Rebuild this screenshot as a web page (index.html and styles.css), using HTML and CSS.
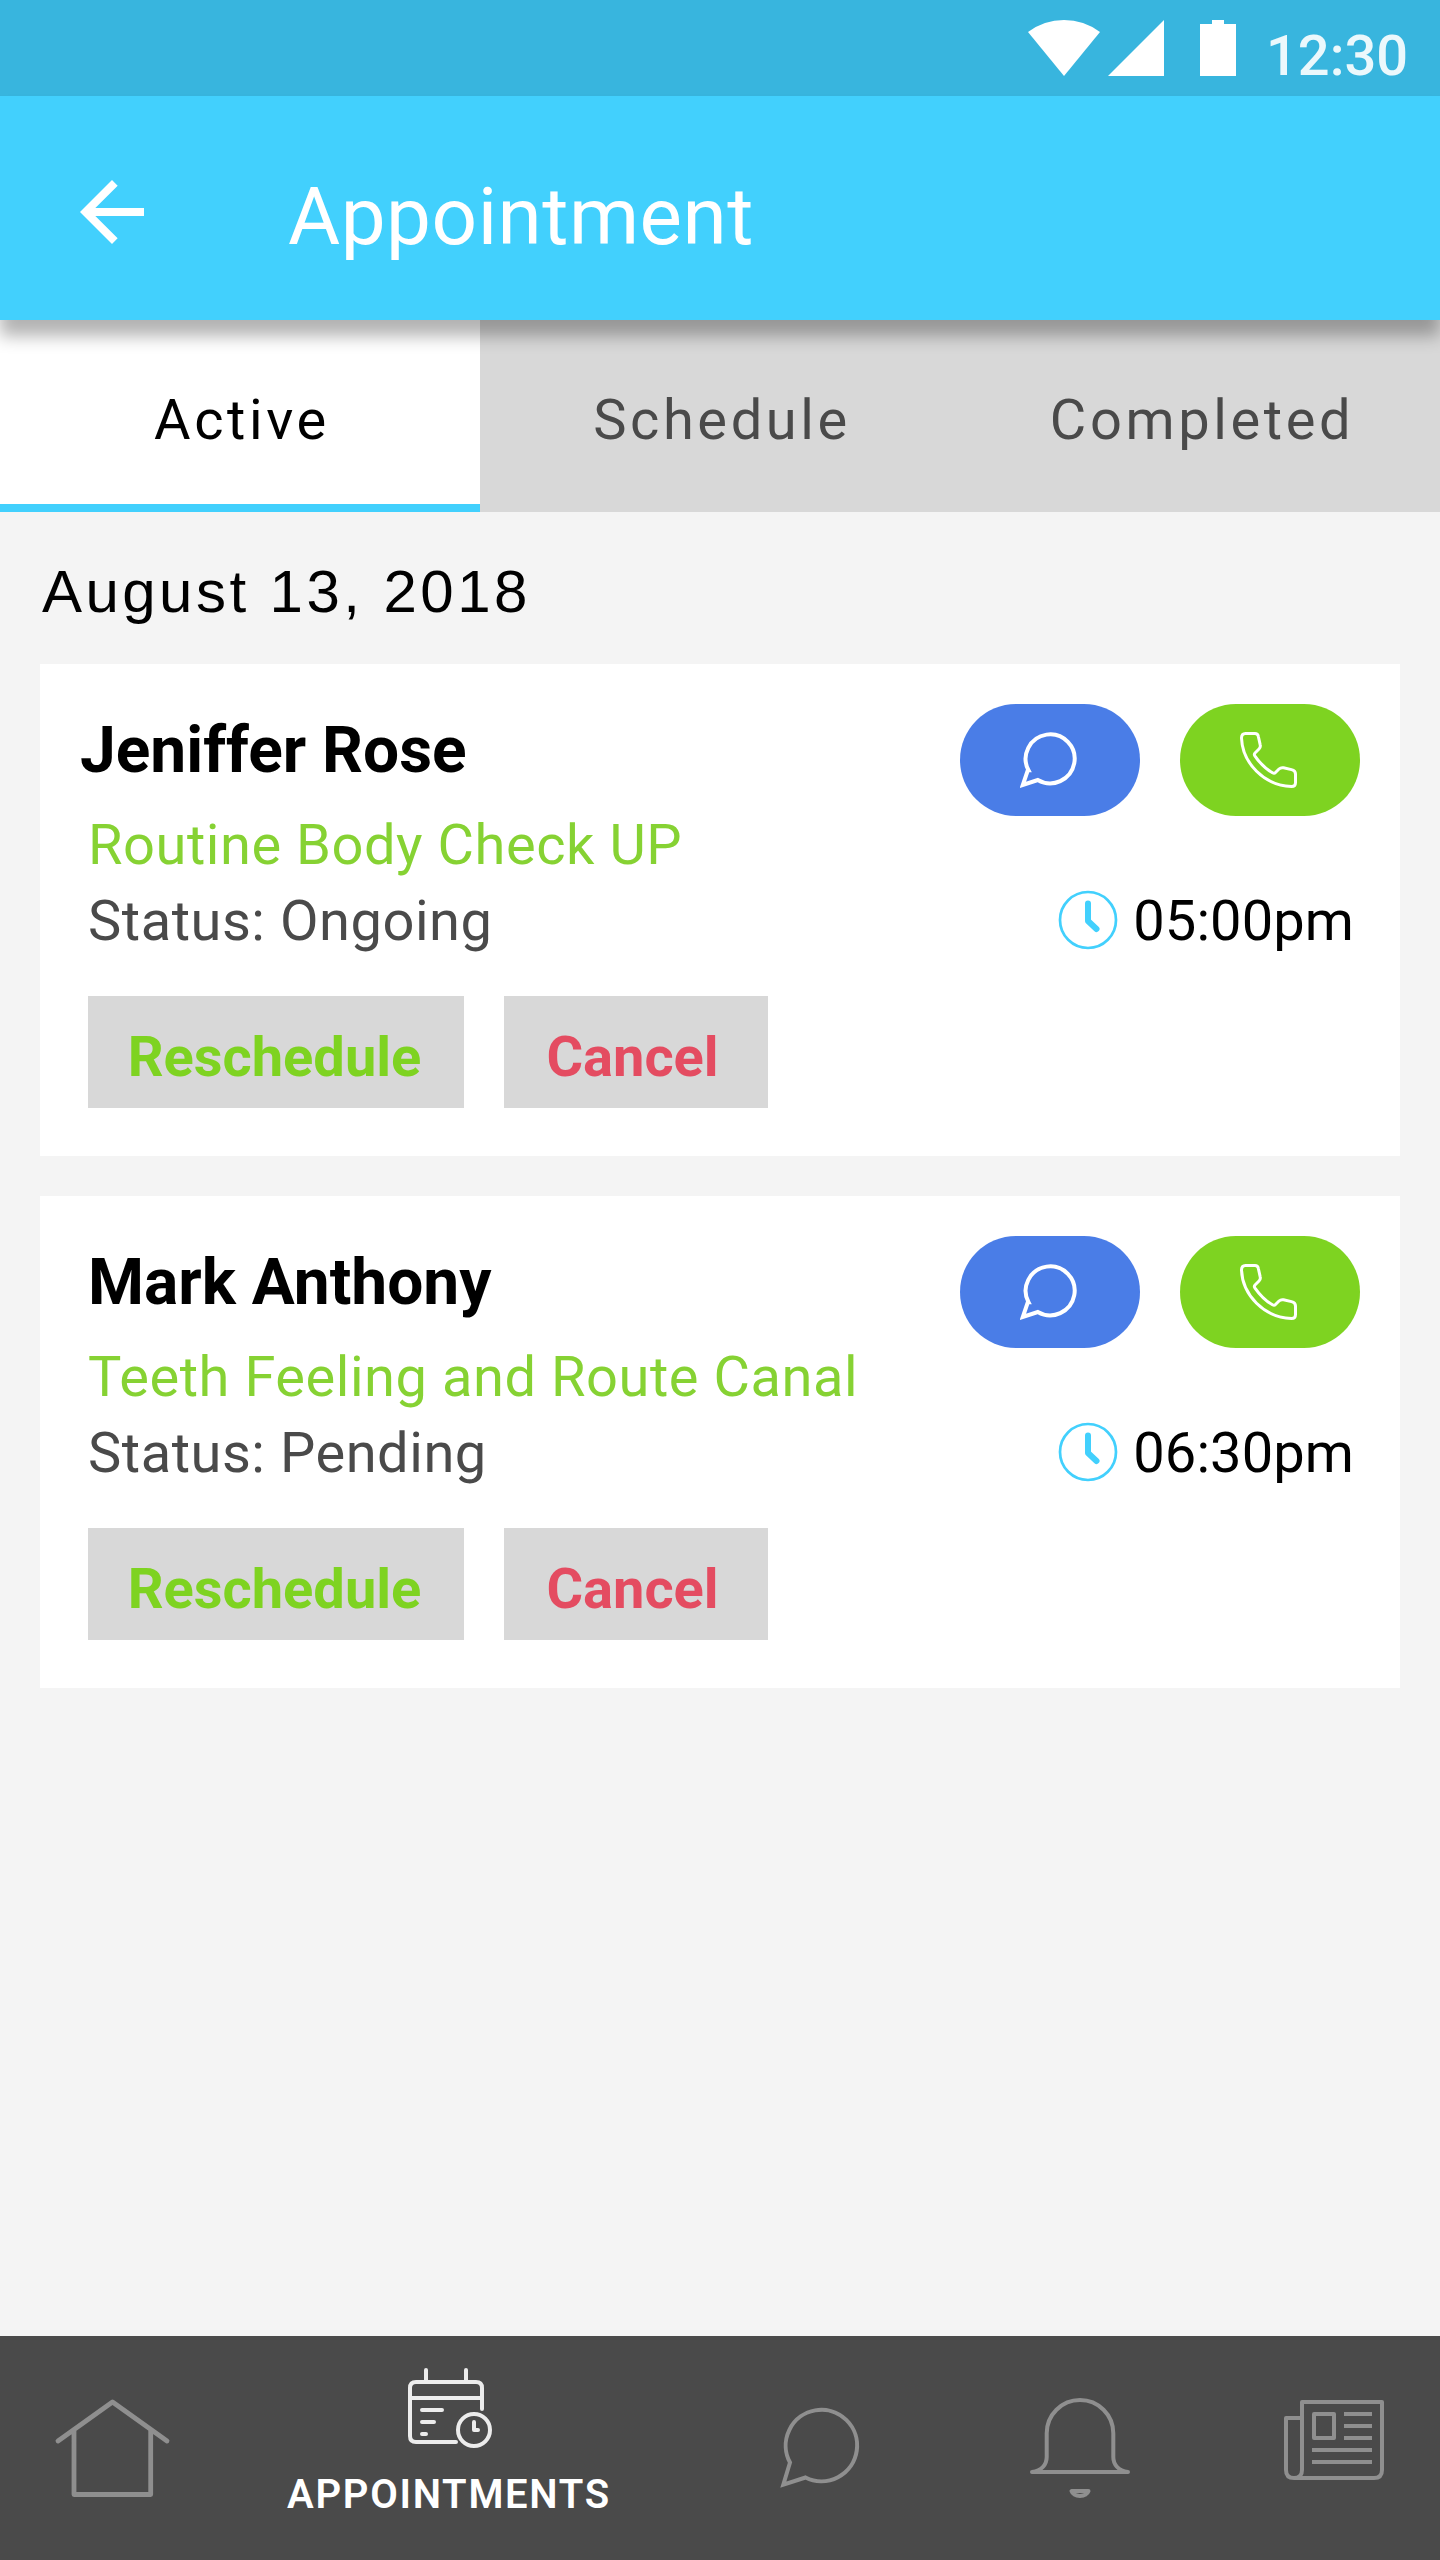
FILE: index.html
```html
<!DOCTYPE html>
<html lang="en">
<head>
<meta charset="utf-8">
<title>Appointment</title>
<link rel="stylesheet" href="styles.css">
</head>
<body>
<svg class="defs" width="0" height="0" aria-hidden="true">
  <symbol id="bubble" viewBox="1020.500 730 60 60">
    <path d="M1029 770.3A24.5 24.5 0 1 1 1038.3 780L1023.3 785L1028.3 770.3Z" fill="none" stroke="#fff" stroke-width="4"/>
  </symbol>
  <symbol id="phone" viewBox="1239 730 62 60">
    <path d="M1245.5 733.5H1255Q1257.8 733.5 1258.3 736.3L1260.2 744.8Q1260.8 747.2 1259 749L1255 753Q1253.8 754.2 1254.8 755.8Q1263 767.5 1272.5 772.8Q1274.3 773.8 1275.5 772.5L1279 769Q1281 767.2 1283.5 767.8L1291.5 769.6Q1295.5 770.5 1295.5 774V782.5Q1295.5 786.5 1291.5 786.5C1264 785.5 1242.500 763 1241.500 738Q1241.500 733.500 1245.500 733.500Z" fill="none" stroke="#fff" stroke-width="3"/>
  </symbol>
  <symbol id="clock" viewBox="0 0 60 60">
    <circle cx="30" cy="30" r="28" fill="none" stroke="#42d0fd" stroke-width="2.700"/>
    <path d="M30 13.500V31L38.500 39" fill="none" stroke="#42d0fd" stroke-width="6" stroke-linecap="round" stroke-linejoin="round"/>
  </symbol>
</svg>
<div class="screen">
  <div class="status-bar">
    <svg width="208" height="56" viewBox="0 0 208 56" fill="#fff">
      <path d="M36 56L0 12Q16 0 36 0T72 12Z"/>
      <path d="M80 56L136 0V56Z"/>
      <path d="M172 4H184V0H196V4H208V56H172Z"/>
    </svg>
    <span class="time">12:30</span>
  </div>
  <header class="app-bar">
    <svg width="96" height="96" viewBox="0 0 24 24" fill="#fff"><path d="M20 11H7.830l5.590-5.590L12 4l-8 8 8 8 1.410-1.410L7.830 13H20z"/></svg>
    <h1>Appointment</h1>
  </header>
  <nav class="tabs">
    <div class="tab active">Active</div>
    <div class="tab">Schedule</div>
    <div class="tab">Completed</div>
  </nav>
  <main>
    <h2 class="date">August 13, 2018</h2>
    <article class="card">
      <div class="info">
        <h3 class="outdent">Jeniffer Rose</h3>
        <p class="service">Routine Body Check UP</p>
        <p class="state">Status: Ongoing</p>
        <div class="actions"><button class="reschedule">Reschedule</button><button class="cancel">Cancel</button></div>
      </div>
      <div class="side">
        <div class="contact">
          <span class="pill message"><svg width="60" height="60"><use href="#bubble"/></svg></span>
          <span class="pill call"><svg width="62" height="60"><use href="#phone"/></svg></span>
        </div>
        <div class="slot"><svg width="60" height="60"><use href="#clock"/></svg><span>05:00pm</span></div>
      </div>
    </article>
    <article class="card">
      <div class="info">
        <h3>Mark Anthony</h3>
        <p class="service">Teeth Feeling and Route Canal</p>
        <p class="state">Status: Pending</p>
        <div class="actions"><button class="reschedule">Reschedule</button><button class="cancel">Cancel</button></div>
      </div>
      <div class="side">
        <div class="contact">
          <span class="pill message"><svg width="60" height="60"><use href="#bubble"/></svg></span>
          <span class="pill call"><svg width="62" height="60"><use href="#phone"/></svg></span>
        </div>
        <div class="slot"><svg width="60" height="60"><use href="#clock"/></svg><span>06:30pm</span></div>
      </div>
    </article>
  </main>
  <footer class="bottom-nav">
    <div class="nav-item home">
      <svg width="120" height="104" viewBox="52 2396 120 104">
        <path d="M58 2441L112.500 2402L167 2441M74 2430V2494.500H150.700V2430"/>
      </svg>
    </div>
    <div class="nav-item current">
      <svg width="88" height="84" viewBox="406 2366 88 84">
        <path d="M426 2370V2380M466 2370V2380M482 2409V2388Q482 2382 476 2382H416Q410 2382 410 2388V2436Q410 2442 416 2442H456M410 2398H482M422 2410H442M422 2422H434M422 2434H426M474 2422V2430H478"/>
        <circle cx="474" cy="2430" r="16"/>
      </svg>
      <span>APPOINTMENTS</span>
    </div>
    <div class="nav-item chat">
      <svg width="88" height="84" viewBox="776 2406 88 84">
        <path stroke-linecap="butt" stroke-linejoin="miter" d="M790 2462.500A35.700 35.700 0 1 1 805.500 2477.500L783.300 2484.700L790 2462.500Z"/>
      </svg>
    </div>
    <div class="nav-item bell">
      <svg width="104" height="104" viewBox="1028 2396 104 104">
        <path d="M1032 2472H1128M1032 2472C1042 2471 1046.700 2464 1046.700 2457V2433.300A33.300 33.300 0 0 1 1113.300 2433.300V2457C1113.300 2464 1118 2471 1128 2472M1071.500 2491H1088.500C1086 2497.500 1074 2497.500 1071.500 2491Z"/>
      </svg>
    </div>
    <div class="nav-item news">
      <svg width="102" height="82" viewBox="1283 2399 102 82">
        <path d="M1302 2418H1286V2470Q1286 2478 1294 2478H1374Q1382 2478 1382 2470V2402H1302V2470Q1302 2478 1294 2478M1314 2414H1334V2438H1314Z"/>
        <path stroke-linecap="butt" d="M1344 2414H1372M1344 2426H1372M1344 2438H1372M1312 2450H1372M1312 2462H1372"/>
      </svg>
    </div>
  </footer>
</div>
</body>
</html>
```
FILE: styles.css
```css
* { box-sizing: border-box; margin: 0; padding: 0; }
body { background: #f4f4f4; font-family: Roboto, "Liberation Sans", sans-serif; color: #000; }
svg { display: block; flex: none; }
.defs { position: absolute; }
.screen { width: 1440px; height: 2560px; display: flex; flex-direction: column; overflow: hidden; }

.status-bar { height: 96px; background: #38b5de; display: flex; justify-content: flex-end; align-items: flex-start; padding: 20px 32px 0 0; }
.time { width: 142px; margin-left: 30px; font-size: 56px; font-weight: 500; line-height: 73px; color: rgba(255, 255, 255, .9); white-space: nowrap; }

.app-bar { position: relative; z-index: 1; height: 224px; background: #42d0fd; display: flex; align-items: center; padding: 20px 64px 12px; gap: 128px; box-shadow: 0 16px 16px rgba(0, 0, 0, .3); }
.app-bar h1 { font-size: 80px; font-weight: 400; line-height: 96px; letter-spacing: .500px; color: #fff; padding-top: 9px; }

.tabs { height: 192px; display: grid; grid-template-columns: repeat(3, 1fr); }
.tab { background: #d8d8d8; color: #4a4a4a; font-size: 56px; letter-spacing: 3.600px; text-align: center; line-height: 201px; height: 192px; padding-left: 4px; }
.tab.active { background: #fff; color: #000; border-bottom: 8px solid #42d0fd; }

main { flex: 1; padding: 0 40px; }
.date { height: 152px; padding-left: 2px; font: 400 60px/160px "Liberation Sans", Arial, sans-serif; letter-spacing: 3.450px; }
.card { height: 492px; margin-bottom: 40px; background: #fff; display: flex; justify-content: space-between; padding: 40px 40px 0 48px; }
.info h3 { font-size: 64px; font-weight: 700; line-height: 94px; height: 92px; white-space: nowrap; }
.info .outdent { margin-left: -8px; }
.info p { font-size: 56px; line-height: 76px; letter-spacing: .540px; white-space: nowrap; }
.service { color: #86d233; padding-top: 11px; }
.state { color: #4a4a4a; }
.actions { display: flex; gap: 40px; margin-top: 37px; }
.actions button { height: 112px; border: 0; background: #d8d8d8; font: 700 56px/66px Roboto, sans-serif; padding-top: 9px; }
.actions .reschedule { width: 376px; padding-right: 3px; color: #7ed321; }
.actions .cancel { width: 264px; padding-right: 7px; color: #e44c61; }
.contact { display: flex; gap: 40px; }
.pill { width: 180px; height: 112px; border-radius: 56px; display: flex; align-items: center; justify-content: center; }
.message { background: #4a7de7; }
.call { background: #7ed321; }
.slot { display: flex; align-items: center; justify-content: flex-end; gap: 15px; margin-top: 66px; padding-right: 6px; font-size: 56px; line-height: 76px; letter-spacing: .100px; }
.slot span { padding-top: 1px; margin-bottom: -1px; }

.bottom-nav { height: 224px; background: #4a4a4a; display: grid; grid-template-columns: 224px 448px 296px 224px 1fr; }
.nav-item { display: flex; flex-direction: column; align-items: center; }
.nav-item svg { fill: none; stroke: #8f8f8f; stroke-width: 4; stroke-linecap: round; stroke-linejoin: round; }
.nav-item.home, .nav-item.bell { padding-top: 60px; }
.nav-item.home svg { stroke-width: 4.800; }
.nav-item.current { padding-top: 30px; }
.nav-item.current svg { stroke: #ececec; margin-left: 4px; }
.nav-item.current span { font-size: 40px; font-weight: 600; line-height: 48px; letter-spacing: 1.700px; color: #fff; margin: 21px 0 0 2px; }
.nav-item.chat { padding-top: 70px; }
.nav-item.news { padding-top: 63px; padding-left: 36px; }
```
